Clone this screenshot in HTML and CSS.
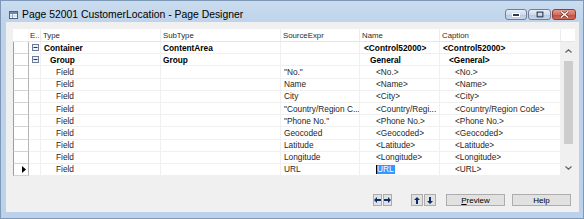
FILE: index.html
```html
<!DOCTYPE html>
<html>
<head>
<meta charset="utf-8">
<title>Page Designer</title>
<link rel="stylesheet" href="styles.css">
</head>
<body>
<div class="window">
  <div class="titlebar">
    <svg class="appicon" width="9" height="8" viewBox="0 0 9 8">
      <rect x="0.5" y="0.5" width="8" height="7" fill="#ffffff" stroke="#4f6180"/>
      <rect x="1" y="1" width="7" height="2" fill="#6f88ad"/>
      <line x1="3.5" y1="3" x2="3.5" y2="7" stroke="#8a9ab5"/>
      <line x1="1" y1="5" x2="8" y2="5" stroke="#b5c2d6"/>
    </svg>
    <span class="title">Page 52001 CustomerLocation - Page Designer</span>
    <div class="capbtns">
      <div class="capbtn w22">
        <svg width="8" height="4" viewBox="0 0 8 4"><rect x="0.5" y="0.5" width="7" height="3" fill="#2c3a52" stroke="#ffffff" stroke-width="1"/></svg>
      </div>
      <div class="capbtn w23">
        <svg width="8" height="7" viewBox="0 0 8 7"><rect x="1" y="1" width="6" height="5" fill="none" stroke="#2c3a52" stroke-width="1.4"/><rect x="0" y="0" width="8" height="7" fill="none" stroke="#ffffff" stroke-width="0.6"/></svg>
      </div>
      <div class="capbtn close">
        <svg width="9" height="7" viewBox="0 0 9 7"><path d="M1 0.5 L8 6.5 M8 0.5 L1 6.5" stroke="#5a1e18" stroke-width="2.6"/><path d="M1 0.5 L8 6.5 M8 0.5 L1 6.5" stroke="#ffffff" stroke-width="1.5"/></svg>
      </div>
    </div>
  </div>

  <div class="client">
    <div class="grid">
      <div class="head">
        <div class="hc"></div>
        <div class="hc">E..</div>
        <div class="hc">Type</div>
        <div class="hc">SubType</div>
        <div class="hc">SourceExpr</div>
        <div class="hc">Name</div>
        <div class="hc">Caption</div>
        <div class="hc last"></div>
      </div>
      <div class="body">
        <div class="rows">
          <div class="row">
            <div class="c sel"></div>
            <div class="c exp"><svg width="7" height="7" viewBox="0 0 7 7"><rect x="0.5" y="0.5" width="6" height="6" fill="#eef1f7" stroke="#6c7c98"/><line x1="1.5" y1="3.5" x2="5.5" y2="3.5" stroke="#2b3550"/></svg></div>
            <div class="c b l0">Container</div>
            <div class="c b st">ContentArea</div>
            <div class="c se"></div>
            <div class="c b n0">&lt;Control52000&gt;</div>
            <div class="c b k0">&lt;Control52000&gt;</div>
          </div>
          <div class="row">
            <div class="c sel"></div>
            <div class="c exp"><svg width="7" height="7" viewBox="0 0 7 7"><rect x="0.5" y="0.5" width="6" height="6" fill="#eef1f7" stroke="#6c7c98"/><line x1="1.5" y1="3.5" x2="5.5" y2="3.5" stroke="#2b3550"/></svg></div>
            <div class="c b l1">Group</div>
            <div class="c b st">Group</div>
            <div class="c se"></div>
            <div class="c b n1">General</div>
            <div class="c b k1">&lt;General&gt;</div>
          </div>
          <div class="row">
            <div class="c sel"></div><div class="c exp"></div>
            <div class="c l2">Field</div><div class="c st"></div>
            <div class="c se">"No."</div>
            <div class="c n2">&lt;No.&gt;</div>
            <div class="c k2">&lt;No.&gt;</div>
          </div>
          <div class="row">
            <div class="c sel"></div><div class="c exp"></div>
            <div class="c l2">Field</div><div class="c st"></div>
            <div class="c se">Name</div>
            <div class="c n2">&lt;Name&gt;</div>
            <div class="c k2">&lt;Name&gt;</div>
          </div>
          <div class="row">
            <div class="c sel"></div><div class="c exp"></div>
            <div class="c l2">Field</div><div class="c st"></div>
            <div class="c se">City</div>
            <div class="c n2">&lt;City&gt;</div>
            <div class="c k2">&lt;City&gt;</div>
          </div>
          <div class="row">
            <div class="c sel"></div><div class="c exp"></div>
            <div class="c l2">Field</div><div class="c st"></div>
            <div class="c se">"Country/Region C...</div>
            <div class="c n2">&lt;Country/Regi...</div>
            <div class="c k2">&lt;Country/Region Code&gt;</div>
          </div>
          <div class="row">
            <div class="c sel"></div><div class="c exp"></div>
            <div class="c l2">Field</div><div class="c st"></div>
            <div class="c se">"Phone No."</div>
            <div class="c n2">&lt;Phone No.&gt;</div>
            <div class="c k2">&lt;Phone No.&gt;</div>
          </div>
          <div class="row">
            <div class="c sel"></div><div class="c exp"></div>
            <div class="c l2">Field</div><div class="c st"></div>
            <div class="c se">Geocoded</div>
            <div class="c n2">&lt;Geocoded&gt;</div>
            <div class="c k2">&lt;Geocoded&gt;</div>
          </div>
          <div class="row">
            <div class="c sel"></div><div class="c exp"></div>
            <div class="c l2">Field</div><div class="c st"></div>
            <div class="c se">Latitude</div>
            <div class="c n2">&lt;Latitude&gt;</div>
            <div class="c k2">&lt;Latitude&gt;</div>
          </div>
          <div class="row">
            <div class="c sel"></div><div class="c exp"></div>
            <div class="c l2">Field</div><div class="c st"></div>
            <div class="c se">Longitude</div>
            <div class="c n2">&lt;Longitude&gt;</div>
            <div class="c k2">&lt;Longitude&gt;</div>
          </div>
          <div class="row">
            <div class="c sel cur"><svg width="4" height="7" viewBox="0 0 4 7"><polygon points="0,0 4,3.5 0,7" fill="#000"/></svg></div>
            <div class="c exp"></div>
            <div class="c l2">Field</div><div class="c st"></div>
            <div class="c se">URL</div>
            <div class="c n2 edit"><span class="caret"></span><span class="selected">URL</span></div>
            <div class="c k2">&lt;URL&gt;</div>
          </div>
        </div>
        <div class="vscroll">
          <div class="sb-btn up"><svg width="7" height="4" viewBox="0 0 7 4"><polyline points="0.5,3.5 3.5,0.8 6.5,3.5" fill="none" stroke="#606060" stroke-width="1.2"/></svg></div>
          <div class="sb-track"><div class="sb-thumb"></div></div>
          <div class="sb-btn down"><svg width="7" height="4" viewBox="0 0 7 4"><polyline points="0.5,0.5 3.5,3.2 6.5,0.5" fill="none" stroke="#606060" stroke-width="1.2"/></svg></div>
        </div>
      </div>
    </div>

    <div class="footer">
      <div class="abtn w9"><svg width="7" height="6" viewBox="0 0 7 6"><polygon points="0,3 3,0 3,2 7,2 7,4 3,4 3,6" fill="#0c2d6b"/></svg></div>
      <div class="abtn w9 g1"><svg width="7" height="6" viewBox="0 0 7 6"><polygon points="7,3 4,0 4,2 0,2 0,4 4,4 4,6" fill="#0c2d6b"/></svg></div>
      <div class="abtn w12 g19"><svg width="6" height="7" viewBox="0 0 6 7"><polygon points="3,0 6,3 4,3 4,7 2,7 2,3 0,3" fill="#0c2d6b"/></svg></div>
      <div class="abtn w12 g1"><svg width="6" height="7" viewBox="0 0 6 7"><polygon points="3,7 6,4 4,4 4,0 2,0 2,4 0,4" fill="#0c2d6b"/></svg></div>
      <div class="btn g10"><span class="u">P</span>review</div>
      <div class="btn g7">Help</div>
    </div>
  </div>
</div>
</body>
</html>
```

FILE: styles.css
```css
* { box-sizing: border-box; }
html, body { margin: 0; padding: 0; }
body {
  width: 584px;
  height: 219px;
  overflow: hidden;
  background: #bcd2ea;
  font-family: "Liberation Sans", Arial, sans-serif;
}

.window {
  width: 584px;
  height: 219px;
  display: flex;
  flex-direction: column;
  background: linear-gradient(#cadcef, #bed3ea 22px, #bcd2ea);
  border: 1px solid #7f98b6;
  padding: 0 4px 6px 5px;
}

/* title bar */
.titlebar {
  flex: none;
  height: 21px;
  padding-top: 6px;
  display: flex;
  align-items: center;
}
.appicon { flex: none; margin-left: 3px; }
.title {
  margin-left: 4px;
  font-size: 10.4px;
  color: #000;
  white-space: nowrap;
}
.capbtns {
  margin-left: auto;
  margin-right: 3px;
  display: flex;
  gap: 1px;
}
.capbtn {
  height: 11px;
  border: 1px solid #6e8099;
  border-radius: 3px;
  background: linear-gradient(#e6eef8, #d0dcea 50%, #b9c9dd 51%, #c8d6e6);
  display: flex;
  align-items: center;
  justify-content: center;
}
.capbtn.w22 { width: 22px; }
.capbtn.w23 { width: 23px; }
.capbtn.close {
  width: 24px;
  border-color: #8c3d33;
  background: linear-gradient(#e39a8e, #d4705f 50%, #c2493a 51%, #cf6a58);
}

/* client area */
.client {
  flex: 1;
  display: flex;
  flex-direction: column;
  background: #f0f0f0;
  padding: 7px 4px 6px 7px;
}

.grid {
  flex: none;
  width: 562px;
  height: 147px;
  background: #ffffff;
  display: flex;
  flex-direction: column;
}

.head {
  flex: none;
  height: 13px;
  display: grid;
  grid-template-columns: 16px 12px 120px 120px 79px 80px 121px 14px;
}
.hc {
  font-size: 7.8px;
  color: #2b2b2b;
  padding-left: 2px;
  display: flex;
  align-items: center;
  white-space: nowrap;
  overflow: hidden;
  border-right: 1px solid #ececec;
  border-bottom: 1px solid #e6e6e6;
}
.hc:first-child { padding-left: 0; border-right: 1px solid #f4f4f4; }
.hc:nth-child(2) { padding-left: 1px; }
.hc.last { border-right: none; }

.body {
  flex: 1;
  display: flex;
}
.rows {
  width: 548px;
  display: flex;
  flex-direction: column;
}
.row {
  height: 12.2px;
  display: grid;
  grid-template-columns: 16px 12px 120px 120px 79px 80px 121px;
}
.c {
  font-size: 8.3px;
  color: #262626;
  display: flex;
  align-items: center;
  white-space: nowrap;
  overflow: hidden;
  border-right: 1px solid #f0f0f0;
  border-bottom: 1px solid #f0f0f0;
}
.c.b { font-weight: bold; color: #000; }

.c.sel {
  border-left: 1px solid #9d9d9d;
  border-right: 1px solid #b4b4b4;
  border-bottom: 1px solid #d2d2d2;
  background: #ffffff;
}
.c.sel.cur { padding-left: 8px; }
.c.exp { padding-left: 3px; }

.l0 { padding-left: 3px; }
.l1 { padding-left: 9px; }
.l2 { padding-left: 15px; }
.st { padding-left: 2px; }
.se { padding-left: 3px; }
.n0 { padding-left: 4px; }
.n1 { padding-left: 10px; }
.n2 { padding-left: 16px; }
.k0 { padding-left: 3px; }
.k1 { padding-left: 9px; }
.k2 { padding-left: 15px; }

.caret {
  width: 1px;
  height: 9px;
  background: #000;
}
.selected {
  background: #3399ff;
  color: #ffffff;
  padding: 0 1px 0 0;
  line-height: 9px;
}

/* vertical scrollbar */
.vscroll {
  width: 14px;
  display: flex;
  flex-direction: column;
  background: #f0f0f0;
}
.sb-btn {
  display: flex;
  align-items: center;
  justify-content: center;
}
.sb-btn.up { height: 18px; }
.sb-btn.down { height: 17px; }
.sb-track {
  flex: 1;
  padding: 1px 2px 0 3px;
}
.sb-thumb {
  height: 83px;
  background: #cdcdcd;
}

/* footer */
.footer {
  flex: 1;
  display: flex;
  align-items: flex-end;
  justify-content: flex-end;
  padding-right: 4px;
}
.abtn {
  height: 12px;
  border: 1px solid #adadad;
  background: #e1e1e1;
  display: flex;
  align-items: center;
  justify-content: center;
}
.abtn.w9 { width: 9px; }
.abtn.w12 { width: 12px; }
.g1 { margin-left: 1px; }
.g19 { margin-left: 19px; }
.g10 { margin-left: 10px; }
.g7 { margin-left: 7px; }
.btn {
  width: 59px;
  height: 12px;
  border: 1px solid #adadad;
  background: #e1e1e1;
  font-size: 8px;
  color: #000;
  display: flex;
  align-items: center;
  justify-content: center;
}
.u { text-decoration: underline; }
```
